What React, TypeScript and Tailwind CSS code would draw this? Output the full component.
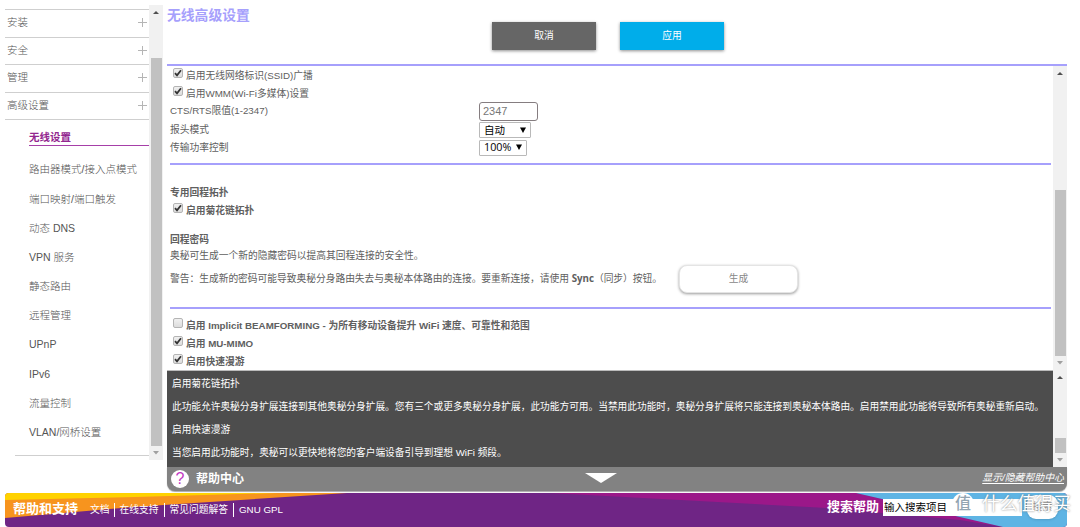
import clsx from 'clsx'

const menu = ['安装', '安全', '管理', '高级设置']

const subMenu = [
  '路由器模式/接入点模式',
  '端口映射/端口触发',
  '动态 DNS',
  'VPN 服务',
  '静态路由',
  '远程管理',
  'UPnP',
  'IPv6',
  '流量控制',
  'VLAN/网桥设置',
]

interface ScrollbarProps {
  before: string
  thumb: string
}

const Scrollbar = ({ before, thumb }: ScrollbarProps) => (
  <div className="flex w-3.5 shrink-0 flex-col items-center bg-[#f1f1f1]">
    <svg className="h-[14px] w-2 shrink-0" viewBox="0 0 8 14">
      <path d="M1 9 4 6l3 3z" fill="#505050" />
    </svg>
    <div className={clsx('shrink-0', before)} />
    <div className={clsx('w-[11px] shrink-0 bg-[#c1c1c1]', thumb)} />
    <svg className="mt-auto h-[14px] w-2 shrink-0" viewBox="0 0 8 14">
      <path d="M1 5h6L4 8.5z" fill="#a0a0a0" />
    </svg>
  </div>
)

interface CheckRowProps {
  label: string
  checked?: boolean
  bold?: boolean
}

const CheckRow = ({ label, checked = true, bold = false }: CheckRowProps) => (
  <label className="flex h-[18px] items-center pl-[3px]">
    <span className="mb-[3px] flex h-[10px] w-[10px] shrink-0 items-center justify-center rounded-[2px] border border-[#b4b4b4] bg-linear-to-b from-[#f0f0f0] to-[#dcdcdc]">
      {checked && (
        <svg className="h-2 w-2 shrink-0" viewBox="0 0 8 8">
          <path d="M1 4.2 3 6.3 7 1.2" fill="none" stroke="#333" strokeWidth="1.8" />
        </svg>
      )}
    </span>
    <span className={clsx('mt-[2px] ml-[3px] whitespace-pre', bold && 'font-bold')}>{label}</span>
  </label>
)

const Rule = () => <div className="h-[2px] w-[881px] shrink-0 bg-[#a6a0fc]" />

const Select = ({ value, className }: { value: string; className: string }) => (
  <div
    className={clsx(
      'flex h-4 items-center justify-between rounded-[1px] border border-[#b9b9b9] bg-white pr-1 pl-1 text-black',
      className,
    )}
  >
    <span>{value}</span>
    <svg className="mb-[1px] h-[6px] w-[6px]" viewBox="0 0 6 6">
      <path d="M0 .5h6L3 6z" fill="#000" />
    </svg>
  </div>
)

const Sidebar = () => (
  <div className="mt-[5px] flex h-[455px] w-[158px]">
    <nav className="flex flex-1 flex-col pt-1 text-[10.5px] leading-none font-light text-[#555]">
      <div className="border-t border-[#cfcfcf]">
        {menu.map((item) => (
          <div
            key={item}
            className="flex h-[27.5px] items-center justify-between border-b border-[#cfcfcf] pr-[2px] pb-[2px] pl-[2px]"
          >
            <span>{item}</span>
            <svg className="mt-[1px] h-[9px] w-[9px]" viewBox="0 0 9 9">
              <path d="M4.5 0v9M0 4.5h9" stroke="#b5b5b5" />
            </svg>
          </div>
        ))}
      </div>
      <div className="mt-[10px] ml-6 flex h-4 items-center border-b border-[#a63fa8] font-bold text-[#93278f]">
        无线设置
      </div>
      <div className="mt-[9px] ml-6">
        {subMenu.map((item) => (
          <div key={item} className="flex h-[29.2px] items-center">
            {item}
          </div>
        ))}
      </div>
      <div className="mt-[8px] ml-[10px] border-t border-[#cfcfcf]" />
    </nav>
    <Scrollbar before="h-[39px]" thumb="h-[388px]" />
  </div>
)

const Settings = () => (
  <div className="flex h-[304px]">
    <div className="flex flex-1 flex-col pl-[3px] text-[9.75px] leading-none text-[#606060]">
      <CheckRow label="启用无线网络标识(SSID)广播" />
      <CheckRow label="启用WMM(Wi-Fi多媒体)设置" />
      <div className="flex h-[19px] items-center">
        <span className="w-[309px]">CTS/RTS限值(1-2347)</span>
        <div className="flex h-[19px] w-[59px] items-center rounded-[3px] border border-[#857d80] pl-[3px] text-[11px] text-[#777]">
          2347
        </div>
      </div>
      <div className="mt-[1px] flex h-[17px] items-center">
        <span className="w-[309px]">报头模式</span>
        <Select value="自动" className="w-[52px] text-[10.5px]" />
      </div>
      <div className="flex h-[18px] items-center">
        <span className="mt-[1px] w-[309px]">传输功率控制</span>
        <Select value="100%" className="w-12 font-['Open_Sans'] text-[10.75px]" />
      </div>
      <div className="mt-[6px]">
        <Rule />
      </div>
      <div className="mt-[19px] flex h-[18px] items-center font-bold">专用回程拓扑</div>
      <div className="-mt-[1px]">
        <CheckRow label="启用菊花链拓扑" bold />
      </div>
      <div className="mt-[14px] flex h-4 items-center font-bold">回程密码</div>
      <div className="flex h-4 items-center">奥秘可生成一个新的隐藏密码以提高其回程连接的安全性。</div>
      <div className="flex h-[30px] items-center">
        <p className="w-[509px] whitespace-nowrap tracking-[-0.02px]">
          警告：生成新的密码可能导致奥秘分身路由失去与奥秘本体路由的连接。要重新连接，请使用{' '}
          <b className="font-['Open_Sans']">Sync</b>（同步）按钮。
        </p>
        <button className="mb-[1px] h-7 w-[119px] rounded-[8px] border border-[#e4e4e4] bg-white text-[#888] shadow-[0_1px_3px_rgba(0,0,0,0.4)]">
          生成
        </button>
      </div>
      <div className="mt-[13px]">
        <Rule />
      </div>
      <div className="mt-[7px]">
        <CheckRow label="启用 Implicit BEAMFORMING - 为所有移动设备提升 WiFi 速度、可靠性和范围" checked={false} bold />
        <CheckRow label="启用 MU-MIMO" bold />
        <CheckRow label="启用快速漫游" bold />
      </div>
    </div>
    <Scrollbar before="h-[110px]" thumb="h-[166px]" />
  </div>
)

const HelpPanel = () => (
  <div className="flex h-[97px]">
    <div className="flex-1 border-t border-[#bbb] bg-[#4d4d4d] pt-[2px] pl-[5px] text-[9.7px] leading-none whitespace-nowrap text-white">
      <p className="flex h-[22.7px] items-center">启用菊花链拓扑</p>
      <p className="flex h-[22.7px] items-center">
        此功能允许奥秘分身扩展连接到其他奥秘分身扩展。您有三个或更多奥秘分身扩展，此功能方可用。当禁用此功能时，奥秘分身扩展将只能连接到奥秘本体路由。启用禁用此功能将导致所有奥秘重新启动。
      </p>
      <p className="flex h-[22.7px] items-center">启用快速漫游</p>
      <p className="flex h-[22.7px] items-center">当您启用此功能时，奥秘可以更快地将您的客户端设备引导到理想 WiFi 频段。</p>
    </div>
    <Scrollbar before="h-[54px]" thumb="h-[15px]" />
  </div>
)

const HelpBar = () => (
  <div className="flex h-6 items-center rounded-b-lg bg-[#828282] pr-[3px] pl-1 text-white shadow-[0_1px_1px_#aaa]">
    <span className="flex h-[18px] w-[18px] items-center justify-center rounded-full bg-white text-[16px] leading-none text-[#c239c4]">
      ?
    </span>
    <span className="ml-[7px] text-[12px] leading-none font-bold">帮助中心</span>
    <svg className="mb-[2px] ml-[341px] h-[10px] w-8" viewBox="0 0 32 10">
      <path d="M0 0h32L16 10z" fill="#fff" />
    </svg>
    <span className="mb-[3px] ml-auto text-[9.9px] leading-none italic underline underline-offset-2">
      显示/隐藏帮助中心
    </span>
  </div>
)

const Watermark = () => (
  <div className="absolute top-0 left-[947px] flex h-6 items-center text-white">
    <span className="mb-[2px] flex h-[22px] w-[22px] items-center justify-center rounded-full bg-white text-[16px] leading-none font-medium text-[#92a5b2]">
      值
    </span>
    <span className="ml-[8px] text-[17.8px] leading-none whitespace-nowrap [text-shadow:0_0_2px_#777]">什么值得买</span>
  </div>
)

const Footer = () => (
  <footer className="relative mt-[2px] ml-[5px] h-[34px] w-[1062px]">
    <svg className="absolute inset-0 h-[34px] w-[1062px] rounded-[4px]" viewBox="0 0 1062 34">
      <path d="M0 0h1062v34H0z" fill="#6f2585" />
      <path d="M0 0h342L128 14 0 25z" fill="#f7941e" />
      <path d="M0 0h273L130 4 0 7z" fill="#ffd200" />
      <path d="M545 0h306l147 34L955 27 822 15z" fill="#9b1889" />
      <path d="M851 0h211v34H998z" fill="#5eb4e4" />
    </svg>
    <div className="relative flex h-[34px] items-center text-[9.75px] leading-none whitespace-nowrap text-white">
      <span className="mb-[3px] ml-2 text-[13px] font-bold">帮助和支持</span>
      <div className="mb-[1px] ml-[12px] flex items-center">
        <span className="pr-1">文档</span>
        <span className="flex h-3.5 items-center border-l border-white px-[5px]">在线支持</span>
        <span className="flex h-3.5 items-center border-l border-white px-[5px]">常见问题解答</span>
        <span className="flex h-3.5 items-center border-l border-white px-[5px]">GNU GPL</span>
      </div>
      <span className="mb-[8px] ml-auto text-[13px] font-bold">搜索帮助</span>
      <div className="mb-[6px] ml-[4px] flex h-[17px] w-[139px] items-center bg-white pl-[1px] text-[10.5px] text-black">
        输入搜索项目
      </div>
      <div className="mr-[9px] mb-[6px] ml-[5px] flex h-[24px] w-[31px] items-center justify-center rounded-[9px] bg-white text-[#999] shadow">
        搜索
      </div>
    </div>
    <Watermark />
  </footer>
)

export default function App() {
  return (
    <div className="h-[527px] w-[1080px] overflow-hidden bg-white font-['Liberation_Sans','Noto_Sans_CJK_SC',sans-serif]">
      <div className="flex h-[491px] pl-[5px]">
        <Sidebar />
        <main className="ml-1 w-[900px]">
          <header className="h-16">
            <h1 className="h-[22px] pt-[9px] text-[13.8px] leading-none font-bold text-[#a6a0fc]">无线高级设置</h1>
            <div className="ml-[325px] flex gap-6 text-[9.75px] text-white">
              <button className="h-7 w-[104px] bg-[#666] shadow-[0_1px_3px_rgba(0,0,0,0.45)]">取消</button>
              <button className="h-7 w-[104px] bg-[#00adea] shadow-[0_1px_3px_rgba(0,0,0,0.45)]">应用</button>
            </div>
          </header>
          <div className="h-[2px] bg-[#a6a0fc]" />
          <Settings />
          <HelpPanel />
          <HelpBar />
        </main>
      </div>
      <Footer />
    </div>
  )
}
